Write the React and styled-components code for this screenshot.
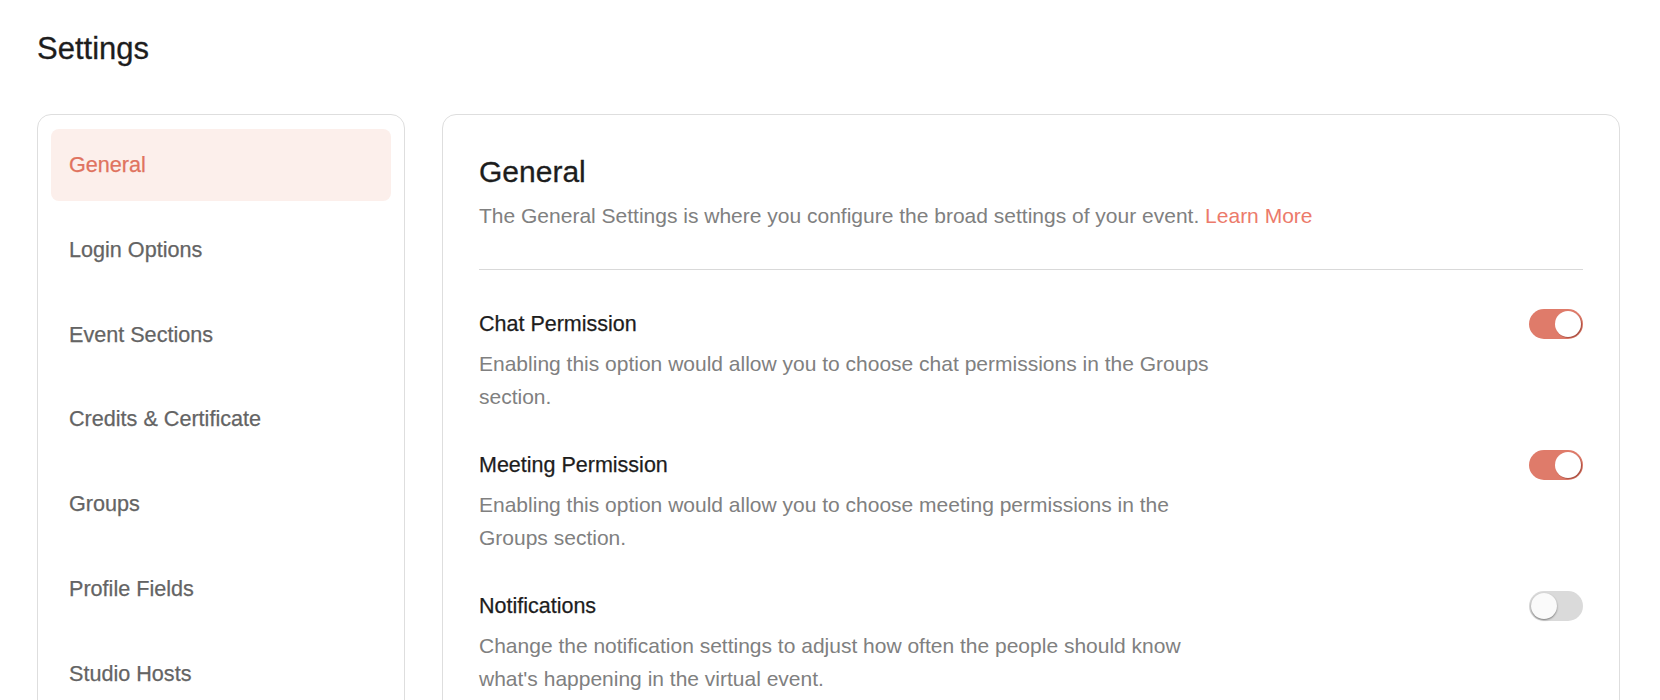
import React, { useState } from "react";
import styled, { createGlobalStyle } from "styled-components";

const GlobalStyle = createGlobalStyle`
  html, body { margin: 0; padding: 0; background: #ffffff; }
  body {
    font-family: "Liberation Sans", Arial, Helvetica, sans-serif;
    -webkit-font-smoothing: antialiased;
  }
  * { box-sizing: border-box; }
`;

const Page = styled.div`
  width: 1660px;
  height: 700px;
  overflow: hidden;
  padding: 29px 40px 0 37px;
`;

const PageTitle = styled.h1`
  margin: 0 0 45px 0;
  font-size: 31px;
  line-height: 40px;
  font-weight: 400;
  color: #1d1d1d;
  -webkit-text-stroke: 0.3px #1d1d1d;
`;

const Layout = styled.div`
  display: grid;
  grid-template-columns: 368px 1fr;
  gap: 37px;
  align-items: start;
`;

const Sidebar = styled.nav`
  border: 1px solid #dedede;
  border-radius: 14px;
  padding: 14px 13px;
  display: flex;
  flex-direction: column;
  gap: 12.8px;
  min-height: 620px;
`;

const NavItem = styled.div`
  height: 72px;
  display: flex;
  align-items: center;
  padding-left: 18px;
  border-radius: 8px;
  font-size: 21.6px;
  color: ${(p) => (p.$active ? "#e0735f" : "#646464")};
  background: ${(p) => (p.$active ? "#fcefeb" : "transparent")};
  -webkit-text-stroke: 0.25px ${(p) => (p.$active ? "#e0735f" : "#646464")};
  cursor: pointer;
`;

const Card = styled.section`
  border: 1px solid #dedede;
  border-radius: 14px;
  padding: 39px 36px 0 36px;
  min-height: 620px;
`;

const Heading = styled.h2`
  margin: 0 0 9px 0;
  font-size: 30px;
  line-height: 36px;
  font-weight: 400;
  color: #1d1d1d;
  -webkit-text-stroke: 0.3px #1d1d1d;
`;

const Lead = styled.p`
  margin: 0;
  font-size: 21px;
  line-height: 34px;
  color: #808080;
`;

const LearnMore = styled.a`
  color: #ec7a6b;
  text-decoration: none;
  cursor: pointer;
`;

const Divider = styled.hr`
  margin: 36px 0 39px 0;
  border: 0;
  border-top: 1px solid #d9d9d9;
  height: 0;
`;

const OptionList = styled.div`
  display: flex;
  flex-direction: column;
  gap: 37px;
`;

const Option = styled.div`
  display: flex;
  flex-direction: column;
  gap: 8px;
`;

const OptionHeader = styled.div`
  display: flex;
  align-items: center;
  justify-content: space-between;
  height: 30px;
`;

const OptionTitle = styled.div`
  font-size: 21.5px;
  line-height: 30px;
  color: #1d1d1d;
  -webkit-text-stroke: 0.25px #1d1d1d;
`;

const OptionText = styled.p`
  margin: 0;
  max-width: 745px;
  font-size: 21px;
  line-height: 33px;
  color: #808080;
`;

const Track = styled.button`
  position: relative;
  width: 54px;
  height: 30px;
  border: 0;
  padding: 0;
  border-radius: 15px;
  background: ${(p) => (p.$on ? "#df7b6a" : "#dadada")};
  cursor: pointer;
  flex-shrink: 0;
`;

const Knob = styled.span`
  position: absolute;
  top: 2px;
  left: ${(p) => (p.$on ? "26px" : "2px")};
  width: 26px;
  height: 26px;
  border-radius: 50%;
  background: ${(p) => (p.$on ? "#ffffff" : "#fafafa")};
  box-shadow: ${(p) =>
    p.$on
      ? "1px 1px 1px rgba(120, 40, 30, 0.55)"
      : "0 1px 2px rgba(0, 0, 0, 0.45)"};
`;

function Toggle({ on, onChange }) {
  return (
    <Track $on={on} onClick={() => onChange(!on)} aria-pressed={on}>
      <Knob $on={on} />
    </Track>
  );
}

const navItems = [
  "General",
  "Login Options",
  "Event Sections",
  "Credits & Certificate",
  "Groups",
  "Profile Fields",
  "Studio Hosts",
];

export default function App() {
  const [opts, setOpts] = useState({ chat: true, meeting: true, notif: false });
  const options = [
    {
      key: "chat",
      title: "Chat Permission",
      text: "Enabling this option would allow you to choose chat permissions in the Groups section.",
    },
    {
      key: "meeting",
      title: "Meeting Permission",
      text: "Enabling this option would allow you to choose meeting permissions in the Groups section.",
    },
    {
      key: "notif",
      title: "Notifications",
      text: "Change the notification settings to adjust how often the people should know what's happening in the virtual event.",
    },
  ];
  return (
    <>
      <GlobalStyle />
      <Page>
        <PageTitle>Settings</PageTitle>
        <Layout>
          <Sidebar>
            {navItems.map((n, i) => (
              <NavItem key={n} $active={i === 0}>
                {n}
              </NavItem>
            ))}
          </Sidebar>
          <Card>
            <Heading>General</Heading>
            <Lead>
              The General Settings is where you configure the broad settings of your event.{" "}
              <LearnMore>Learn More</LearnMore>
            </Lead>
            <Divider />
            <OptionList>
              {options.map((o) => (
                <Option key={o.key}>
                  <OptionHeader>
                    <OptionTitle>{o.title}</OptionTitle>
                    <Toggle
                      on={opts[o.key]}
                      onChange={(v) => setOpts((s) => ({ ...s, [o.key]: v }))}
                    />
                  </OptionHeader>
                  <OptionText>{o.text}</OptionText>
                </Option>
              ))}
            </OptionList>
          </Card>
        </Layout>
      </Page>
    </>
  );
}
